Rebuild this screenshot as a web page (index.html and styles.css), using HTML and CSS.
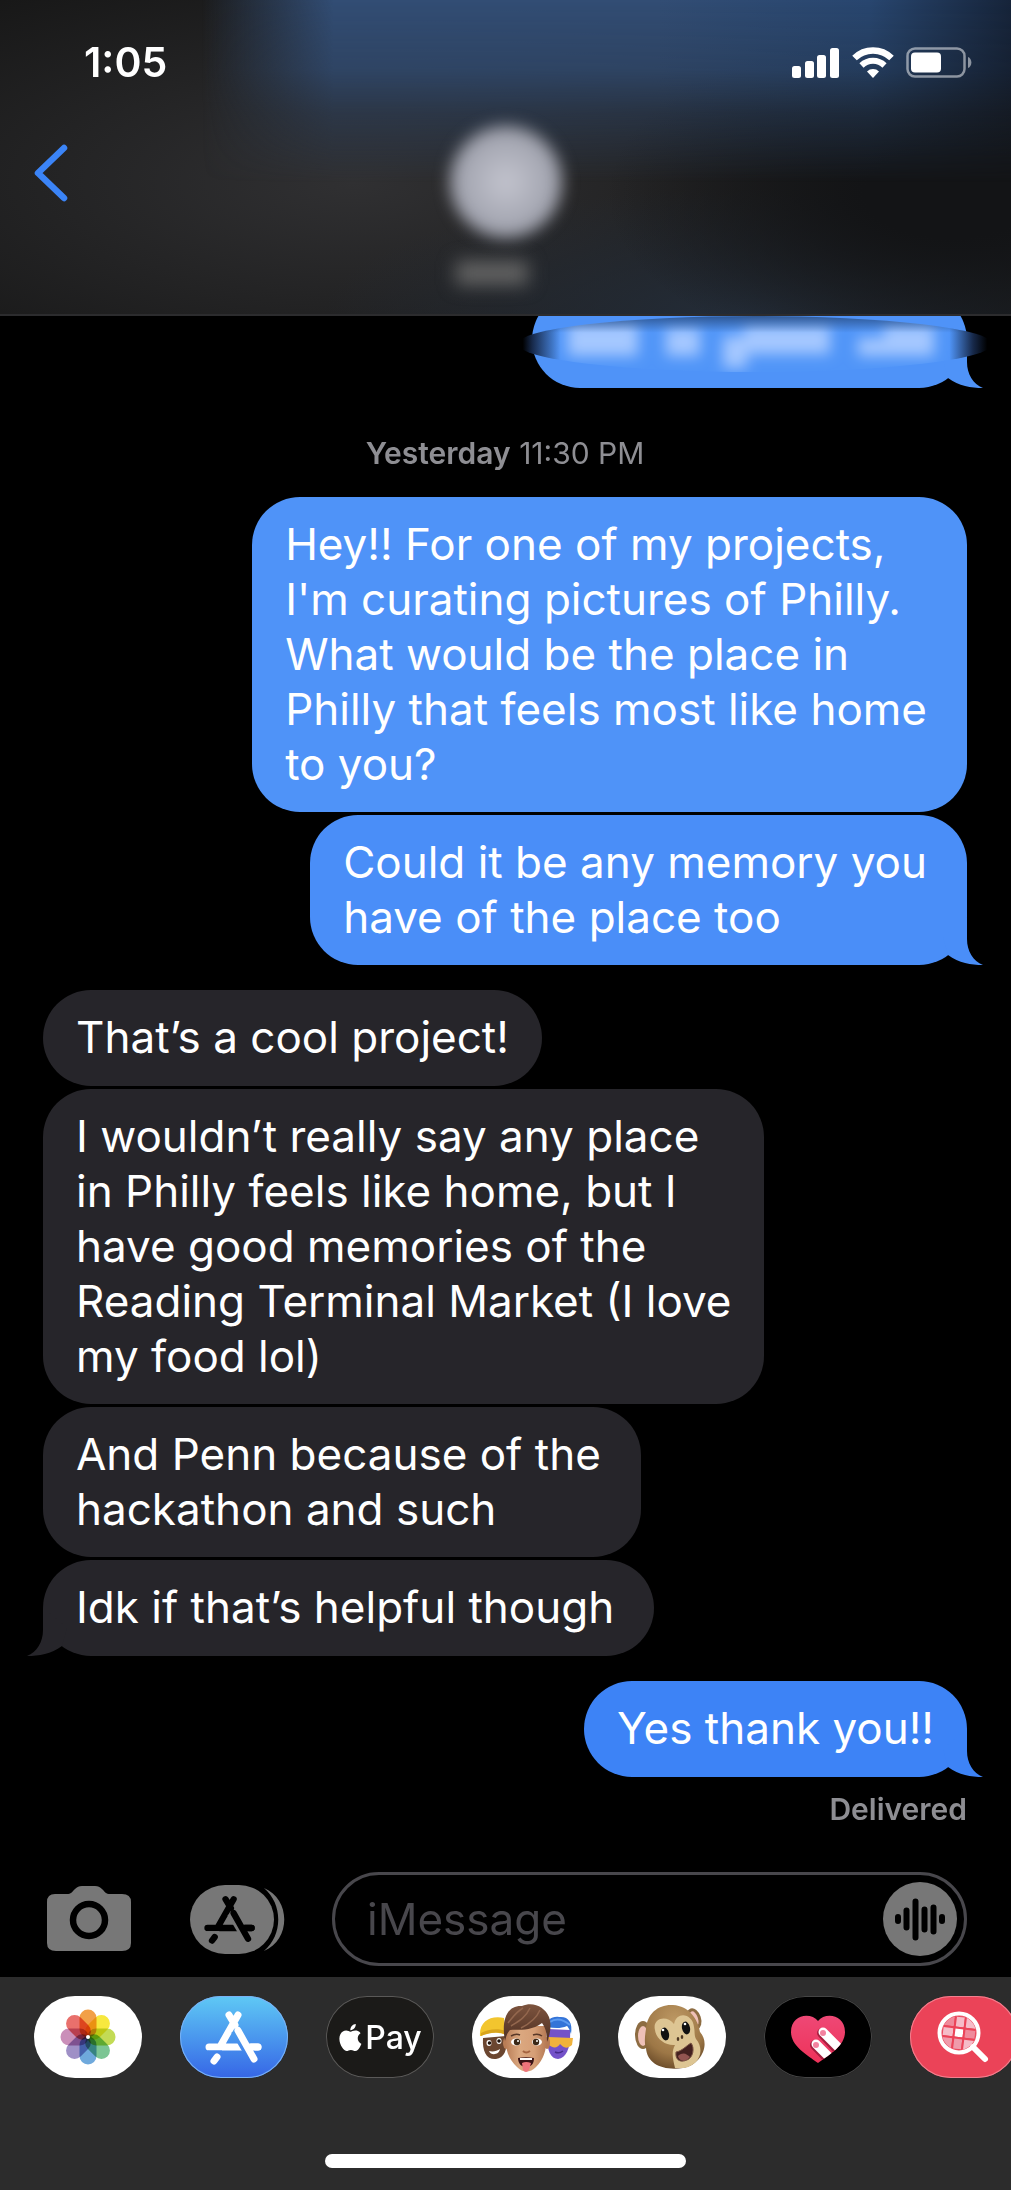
FILE: index.html
```html
<!DOCTYPE html>
<html lang="en">
<head>
<meta charset="utf-8">
<meta name="viewport" content="width=device-width, initial-scale=1">
<title>Messages</title>
<link rel="stylesheet" href="styles.css">
</head>
<body>
<svg class="defs" aria-hidden="true">
  <defs>
    <mask id="a-mask" maskUnits="userSpaceOnUse" x="0" y="0" width="60" height="60">
      <g fill="none" stroke="#fff" stroke-width="7" stroke-linecap="round">
        <path d="M34 8 17 38M25 8l6 10M5 40h49"/>
      </g>
      <path d="M4 45h14" stroke="#000" stroke-width="3"/>
      <path d="M13 50l-3 4" fill="none" stroke="#fff" stroke-width="7" stroke-linecap="round"/>
      <path d="M32 23l17 29" fill="none" stroke="#000" stroke-width="11"/>
      <path d="M34 23.500l16 28.500M44 40h10" fill="none" stroke="#fff" stroke-width="7" stroke-linecap="round"/>
    </mask>
    <symbol id="app-a" viewBox="0 0 60 60"><rect width="60" height="60" fill="currentColor" mask="url(#a-mask)"/></symbol>
    <symbol id="tail" viewBox="0 0 60 48"><path d="M44 0V22C44 34 50 44 60 48C48 48 36 46 25 38L20 20Z" fill="currentColor"/></symbol>
  </defs>
</svg>

<header class="top">
  <div class="status">
    <time class="clock">1:05</time>
    <div class="status-icons">
      <svg width="48" height="32" viewBox="0 0 48 32" fill="#fff" aria-label="Signal"><rect x="0" y="20" width="9" height="12" rx="2.500"/><rect x="13" y="15" width="9" height="17" rx="2.500"/><rect x="25" y="9" width="9" height="23" rx="2.500"/><rect x="38" y="2" width="9" height="30" rx="2.500"/></svg>
      <svg width="42" height="32" viewBox="0 0 42 32" fill="none" stroke="#fff" aria-label="Wi-Fi"><path d="M2.500 12a26.500 26.500 0 0 1 37 0" stroke-width="6.500"/><path d="M9.500 19.500a16.500 16.500 0 0 1 23 0" stroke-width="6"/><path d="M21 32l-6-6.500a8.500 8.500 0 0 1 12 0z" fill="#fff" stroke="none"/></svg>
      <svg width="66" height="32" viewBox="0 0 66 32" aria-label="Battery"><rect x="1.500" y="2.500" width="57" height="28" rx="7.500" fill="none" stroke="#fff" stroke-opacity=".5" stroke-width="2.500"/><rect x="5" y="6.500" width="30" height="20" rx="4" fill="#fff"/><path d="M62 11c4.500 1.500 4.500 9.500 0 11z" fill="#fff" fill-opacity=".5"/></svg>
    </div>
  </div>
  <nav class="nav">
    <button class="plain back" aria-label="Back"><svg width="36" height="60" viewBox="0 0 36 60" fill="none" stroke="#3b84f7" stroke-width="6.500" stroke-linecap="round" stroke-linejoin="round"><path d="M31 5 5 30l26 25"/></svg></button>
    <button class="plain contact" aria-label="Contact"><span class="avatar"></span><span class="contact-name"></span></button>
  </nav>
</header>

<main class="chat">
  <div class="bubble sent cut last-sent">
    <svg class="tail"><use href="#tail"/></svg>
    <svg class="smudge" viewBox="0 0 474 56" aria-hidden="true">
      <defs>
        <clipPath id="oval"><ellipse cx="237" cy="28" rx="237" ry="28"/></clipPath>
        <filter id="soft" x="-30%" y="-60%" width="160%" height="220%"><feGaussianBlur stdDeviation="7"/></filter>
        <linearGradient id="ends"><stop offset=".01" stop-color="#000"/><stop offset=".03" stop-color="#17294a"/><stop offset=".09" stop-color="#5095f8"/><stop offset=".91" stop-color="#5095f8"/><stop offset=".96" stop-color="#17294a"/><stop offset=".99" stop-color="#000"/></linearGradient>
        <linearGradient id="lid" x2="0" y2="1"><stop stop-color="#0b1a33" stop-opacity=".5"/><stop offset=".3" stop-color="#0b1a33" stop-opacity="0"/></linearGradient>
      </defs>
      <g clip-path="url(#oval)">
        <rect width="474" height="56" fill="url(#ends)"/>
        <g fill="#a5c8ff" filter="url(#soft)"><rect x="50" y="8" width="70" height="32"/><rect x="148" y="12" width="34" height="28"/><rect x="205" y="20" width="24" height="32"/><rect x="226" y="10" width="86" height="28"/><rect x="340" y="22" width="30" height="18"/><rect x="366" y="10" width="50" height="30"/></g>
        <rect width="474" height="56" fill="url(#lid)"/>
      </g>
    </svg>
  </div>

  <p class="stamp"><strong>Yesterday</strong> 11:30 PM</p>

  <p class="bubble sent">Hey!! For one of my projects,<br>I'm curating pictures of Philly.<br>What would be the place in<br>Philly that feels most like home<br>to you?</p>
  <p class="bubble sent mid">Could it be any memory you<br>have of the place too<svg class="tail" aria-hidden="true"><use href="#tail"/></svg></p>

  <p class="bubble got turn snug">That’s a cool project!</p>
  <p class="bubble got snug">I wouldn’t really say any place<br>in Philly feels like home, but I<br>have good memories of the<br>Reading Terminal Market (I love<br>my food lol)</p>
  <p class="bubble got">And Penn because of the<br>hackathon and such</p>
  <p class="bubble got">Idk if that’s helpful though<svg class="tail" aria-hidden="true"><use href="#tail"/></svg></p>

  <p class="bubble sent new turn snug">Yes thank you!!<svg class="tail" aria-hidden="true"><use href="#tail"/></svg></p>
  <p class="delivered">Delivered</p>
</main>

<form class="composer">
  <button type="button" class="plain" aria-label="Camera"><svg width="84" height="66" viewBox="0 0 84 66"><path d="M8 8H20C24 8 25 6 28 3C30 1 32 0 35 0H48C51 0 53 1 55 3C58 6 59 8 63 8H75Q84 8 84 16V57Q84 65 75 65H9Q0 65 0 57V16Q0 8 8 8Z" fill="#777"/><circle cx="42" cy="34" r="16" fill="none" stroke="#000" stroke-width="6.500"/></svg></button>
  <button type="button" class="plain apps" aria-label="Apps"><svg width="95" height="69" viewBox="0 0 95 69"><path d="M74 3C101 14 101 55 74 66C93 50 93 19 74 3Z" fill="#777"/><rect width="84" height="69" rx="35" fill="#777"/><use href="#app-a" x="13" y="7" width="54" height="54" color="#000"/></svg></button>
  <div class="field">
    <input type="text" placeholder="iMessage" aria-label="iMessage">
    <button type="button" class="plain" aria-label="Record audio"><svg width="74" height="74" viewBox="0 0 74 74"><circle cx="37" cy="37" r="37" fill="#777"/><path d="M15 35v4M23.500 28.500v17M32.500 19.500v36M41.500 27.500v20M50.500 25.500v24M59 35v4" stroke="#000" stroke-width="6" stroke-linecap="round"/></svg></button>
  </div>
</form>

<footer class="drawer">
  <div class="app-row">
    <button class="app white" aria-label="Photos"><svg width="108" height="82" viewBox="0 0 108 82"><g class="petals">
      <rect x="45.500" y="13.500" width="17" height="28" rx="8.500" fill="#f2a047"/>
      <rect x="45.500" y="13.500" width="17" height="28" rx="8.500" fill="#f7e83e" transform="rotate(45 54 41)"/>
      <rect x="45.500" y="13.500" width="17" height="28" rx="8.500" fill="#c3db55" transform="rotate(90 54 41)"/>
      <rect x="45.500" y="13.500" width="17" height="28" rx="8.500" fill="#7cc594" transform="rotate(135 54 41)"/>
      <rect x="45.500" y="13.500" width="17" height="28" rx="8.500" fill="#6fa9dc" transform="rotate(180 54 41)"/>
      <rect x="45.500" y="13.500" width="17" height="28" rx="8.500" fill="#9f90c6" transform="rotate(225 54 41)"/>
      <rect x="45.500" y="13.500" width="17" height="28" rx="8.500" fill="#ca8fb9" transform="rotate(270 54 41)"/>
      <rect x="45.500" y="13.500" width="17" height="28" rx="8.500" fill="#e9706c" transform="rotate(315 54 41)"/></g><circle cx="54" cy="41" r="2" fill="#fff"/></svg></button>
    <button class="app store" aria-label="App Store"><svg width="60" height="60"><use href="#app-a"/></svg></button>
    <button class="app pay" aria-label="Apple Pay"><svg width="27" height="27" viewBox="1 0 24 24" fill="#fff"><path d="M12.152 6.896c-.948 0-2.415-1.078-3.960-1.040-2.040.027-3.910 1.183-4.961 3.014-2.117 3.675-.546 9.103 1.519 12.090 1.013 1.454 2.208 3.090 3.792 3.039 1.520-.065 2.090-.987 3.935-.987 1.831 0 2.350.987 3.960.948 1.637-.026 2.676-1.480 3.676-2.948 1.156-1.688 1.636-3.325 1.662-3.415-.039-.013-3.182-1.221-3.220-4.857-.026-3.040 2.480-4.494 2.597-4.559-1.429-2.090-3.623-2.324-4.390-2.376-2-.156-3.675 1.090-4.610 1.090zM15.530 3.830c.843-1.012 1.400-2.427 1.245-3.830-1.207.052-2.662.805-3.532 1.818-.78.896-1.454 2.338-1.273 3.714 1.338.104 2.715-.688 3.559-1.701"/></svg><span>Pay</span></button>
    <button class="app white" aria-label="Memoji"><svg width="108" height="82" viewBox="0 0 108 82">
      <defs>
        <linearGradient id="skin"><stop stop-color="#b97d56"/><stop offset=".35" stop-color="#dba880"/><stop offset=".7" stop-color="#d69f77"/><stop offset="1" stop-color="#b67a54"/></linearGradient>
        <linearGradient id="hair" x2="0" y2="1"><stop stop-color="#7d543e"/><stop offset="1" stop-color="#4e2f22"/></linearGradient>
      </defs>
      <path d="M11 42C10 56 15 64 24 63C32 62 36 54 34 40Z" fill="#6b4630"/>
      <path d="M8 40C7 26 18 19 32 22L34 39C26 34 15 37 9 40Z" fill="#f2c52e"/><path d="M9 37C16 33 26 32 34 35V39C26 35 16 37 9 40Z" fill="#d9a51d"/>
      <ellipse cx="17" cy="47" rx="2.500" ry="3" fill="#fff"/><circle cx="17.500" cy="47" r="1.800" fill="#20120c"/><ellipse cx="27" cy="45" rx="2.500" ry="3" fill="#fff"/><circle cx="27" cy="45" r="1.800" fill="#20120c"/><path d="M17 55C21 56 25 55 28 53C27 59 19 60 17 55Z" fill="#fff"/>
      <path d="M75 33C74 53 78 63 86 63C95 62 99 50 98 34Z" fill="#7452c9"/><path d="M75 31C74 24 80 20 87 21C96 20 101 26 99 38C97 32 96 31 95 30C88 33 82 32 75 31Z" fill="#3474d8"/><path d="M78 26C85 21 92 24 98 29" fill="none" stroke="#5d9bf0" stroke-width="2"/>
      <path d="M76 41L101 42L100 49C94 54 91 51 88 48C85 53 80 52 76 48Z" fill="#f0b23c"/><path d="M83 56Q87 58 91 55" fill="none" stroke="#452a8a" stroke-width="1.500"/>
      <ellipse cx="34" cy="47" rx="3" ry="6" fill="#b97d56"/><ellipse cx="75" cy="47" rx="3" ry="6" fill="#b67a54"/>
      <path d="M34 30C32 50 35 62 45 71C51 77 58 77 64 71C73 62 76 50 74 30Z" fill="url(#skin)"/>
      <path d="M33 45C29 24 35 9 50 10C61 5 73 11 77 21C80 29 78 39 75 46C75 36 73 31 70 27C58 36 45 33 38 34C35 37 34 41 33 45Z" fill="url(#hair)"/>
      <path d="M39 30C47 25 54 21 58 12M49 32C59 27 65 21 68 14M36 27C41 21 44 16 51 12" fill="none" stroke="#93674e" stroke-width="1.500"/>
      <path d="M39 40Q44 37 48 39M61 39Q66 37 70 40" fill="none" stroke="#593827" stroke-width="1.500"/>
      <ellipse cx="44" cy="46" rx="5" ry="3.500" fill="#fff"/><circle cx="45" cy="46" r="3.200" fill="#3a2817"/><ellipse cx="65" cy="46" rx="5" ry="3.500" fill="#fff"/><circle cx="64" cy="46" r="3.200" fill="#3a2817"/><circle cx="46" cy="45" r="1" fill="#fff"/><circle cx="65" cy="45" r="1" fill="#fff"/>
      <path d="M51 55Q54 58 58 55" fill="none" stroke="#a56440" stroke-width="2"/><path d="M46 62C51 61 57 61 62 62C62 68 59 71 54 71C49 71 46 67 46 62Z" fill="#3b1316"/><path d="M48 62H60V64H48Z" fill="#fff"/><path d="M50 67Q54 65 59 67L57 74Q54 78 51 74Z" fill="#ee747b"/></svg></button>
    <button class="app white" aria-label="Animoji"><svg width="108" height="82" viewBox="0 0 108 82">
      <defs><radialGradient id="fur" cx=".5" cy=".25" r=".75"><stop offset="0" stop-color="#bd9863"/><stop offset=".7" stop-color="#9d7746"/><stop offset="1" stop-color="#70502c"/></radialGradient></defs>
      <ellipse cx="25" cy="39" rx="8" ry="14" fill="#8d6c42"/><ellipse cx="25" cy="40" rx="5" ry="10" fill="#efc0b7"/><ellipse cx="76" cy="23" rx="7" ry="11" fill="#8d6c42" transform="rotate(-18 76 23)"/><ellipse cx="76" cy="23" rx="4" ry="8" fill="#efc0b7" transform="rotate(-18 76 23)"/>
      <path d="M28 33C29 17 41 8 55 9C71 10 80 23 82 36C93 48 83 69 65 72C45 75 29 68 28 52C26 46 27 39 28 33Z" fill="url(#fur)"/>
      <path d="M37 34C34 23 48 18 56 28C59 14 75 18 76 31C77 36 76 39 78 43C88 55 80 70 66 72H57C55 63 53 56 57 49C48 50 38 43 37 34Z" fill="#ddc593"/>
      <ellipse cx="47" cy="38" rx="4" ry="6.500" fill="#111" transform="rotate(-12 47 38)"/><ellipse cx="68" cy="32" rx="4" ry="6.500" fill="#111" transform="rotate(-12 68 32)"/><circle cx="45" cy="34" r="1.300" fill="#fff"/><circle cx="67" cy="28" r="1.300" fill="#fff"/><ellipse cx="60" cy="43" rx="1.300" ry="2" fill="#4e3824"/><ellipse cx="64" cy="41" rx="1.300" ry="2" fill="#4e3824"/>
      <path d="M58 56C64 55 68 50 73 47C77 52 75 62 69 64C62 67 57 64 58 56Z" fill="#43201f" stroke="#7b5544" stroke-width="1"/><path d="M60 60C66 55 69 59 72 61C68 66 61 66 60 60Z" fill="#925450"/></svg></button>
    <button class="app heart" aria-label="Digital Touch"><svg width="108" height="82" viewBox="0 0 108 82"><defs><linearGradient id="hg" x2="0" y2="1"><stop stop-color="#ee4a78"/><stop offset="1" stop-color="#ee2f55"/></linearGradient><clipPath id="heart"><path d="M54 25C47 16 27 18 27 36C27 50 43 59 54 67C65 59 81 50 81 36C81 18 61 16 54 25Z"/></clipPath></defs><g clip-path="url(#heart)"><rect x="20" y="15" width="68" height="60" fill="url(#hg)"/><path d="M58 37 82 62M51 49 75 74" stroke="#a61f3f" stroke-width="10" stroke-linecap="round"/><path d="M59 36 83 60M52 48 76 72" stroke="#fff" stroke-width="9" stroke-linecap="round"/><circle cx="59" cy="37" r="3" fill="#f3829f"/><circle cx="52" cy="49" r="3" fill="#f3829f"/></g></svg></button>
    <button class="app search" aria-label="Images"><svg width="108" height="82" viewBox="0 0 108 82"><defs><clipPath id="lens"><circle cx="49" cy="37" r="17"/></clipPath></defs><g clip-path="url(#lens)"><g transform="rotate(7 49 37)" stroke="#eb4358" stroke-width="2" fill="#f5bcc8"><rect x="32" y="20" width="12" height="12" fill="#ef8a9b"/><rect x="44" y="20" width="10" height="12"/><rect x="54" y="20" width="12" height="12"/><rect x="32" y="32" width="12" height="10"/><rect x="44" y="32" width="10" height="10" fill="#fff"/><rect x="54" y="32" width="12" height="10" fill="#ef8a9b"/><rect x="32" y="42" width="12" height="12" fill="#ef9bab"/><rect x="44" y="42" width="10" height="12" fill="#ef9bab"/><rect x="54" y="42" width="12" height="12"/></g></g><circle cx="49" cy="37" r="19.500" fill="none" stroke="#fff" stroke-width="4"/><path d="M63 51 75 63" stroke="#fff" stroke-width="6" stroke-linecap="round"/></svg></button>
  </div>
  <div class="home"></div>
</footer>
</body>
</html>
```
FILE: styles.css
```css
* { box-sizing: border-box; }

body {
  margin: 0;
  min-height: 100vh;
  display: flex;
  flex-direction: column;
  overflow-x: hidden;
  background: #000;
  color: #fff;
  font-family: Inter, "Liberation Sans", sans-serif;
}

.defs { position: absolute; width: 0; height: 0; }
svg { display: block; flex: none; }
p { margin: 0; }

.plain {
  display: block;
  padding: 0;
  border: 0;
  background: none;
}

/* Header */
.top {
  position: relative;
  isolation: isolate;
  height: 316px;
  border-bottom: 2px solid #2c2c2e;
  background:
    radial-gradient(ellipse 34% 55% at 94% 62%, #131416 25%, transparent),
    radial-gradient(ellipse 42% 40% at 74% 100%, #242d39, transparent),
    radial-gradient(ellipse 60% 75% at 35% 58%, #303032, transparent),
    #171717;
}

/* Blue light showing through the top of the bar */
.top::before {
  content: "";
  position: absolute;
  inset: 0;
  z-index: -1;
  background: linear-gradient(to right, transparent 20%, #324d74 33%, #324d74 65%, #28466f 86%, #16243a 100%);
  -webkit-mask-image: linear-gradient(#000, #000c 22%, #0006 36%, transparent 58%);
  mask-image: linear-gradient(#000, #000c 22%, #0006 36%, transparent 58%);
}

.status {
  display: flex;
  justify-content: space-between;
  align-items: center;
  padding: 38px 39px 0 84px;
}

.clock {
  font-size: 41px;
  line-height: 48px;
  font-weight: 600;
}

.status-icons { display: flex; gap: 12px; }

.nav {
  display: grid;
  grid-template-columns: 1fr auto 1fr;
  padding: 29px 33px 0;
}

.back { justify-self: start; align-self: start; margin-top: 28px; }

.contact {
  display: flex;
  flex-direction: column;
  align-items: center;
  gap: 23px;
}

.avatar {
  width: 112px;
  height: 112px;
  margin-top: 11px;
  border-radius: 50%;
  background: radial-gradient(circle, #c3c4ce, #8b8e9a);
  filter: blur(8px);
}

.contact-name {
  width: 72px;
  height: 24px;
  margin-right: 28px;
  background: #636363;
  filter: blur(9px);
}

/* Conversation */
.chat {
  flex: 1;
  display: flex;
  flex-direction: column;
  gap: 3px;
  padding: 0 44px 0 43px;
  overflow: hidden;
}

.bubble {
  position: relative;
  min-height: 96px;
  padding: 20px 40px 20px 33px;
  border-radius: 48px;
  font-size: 44px;
  line-height: 55px;
}

.snug { padding-right: 33px; }

.sent {
  align-self: flex-end;
  background: #4f93f8;
  color: #fff;
}

.got {
  align-self: flex-start;
  background: #26252a;
}

.sent.mid { background: #4a8ef8; }
.sent.new { background: #3d83f6; }
.turn { margin-top: 22px; }

.cut {
  width: 435px;
  margin-top: -24px;
}

.tail {
  position: absolute;
  right: -16px;
  bottom: 0;
  width: 60px;
  height: 48px;
  color: #4f93f8;
}

.mid .tail { color: #4a8ef8; }
.new .tail { color: #3d83f6; }

.got .tail {
  right: auto;
  left: -16px;
  color: #26252a;
  transform: scaleX(-1);
}

.smudge {
  position: absolute;
  left: -14px;
  top: 24px;
  width: 474px;
  height: 56px;
}

.stamp {
  padding: 44px 0 23px;
  color: #8e8e93;
  font-size: 30px;
  line-height: 36px;
  text-align: center;
}

.stamp strong { font-weight: 600; }

.delivered {
  padding: 11px 0 0;
  color: #8e8e93;
  font-size: 30px;
  line-height: 36px;
  font-weight: 600;
  text-align: right;
}

/* Message field */
.composer {
  display: flex;
  align-items: center;
  padding: 0 44px 11px 47px;
}

.apps { margin: 0 47px 0 59px; }

.field {
  flex: 1;
  min-width: 0;
  display: flex;
  align-items: center;
  height: 94px;
  padding: 0 7px 0 32px;
  border: 3px solid #48474c;
  border-radius: 47px;
}

.field input {
  flex: 1;
  min-width: 0;
  padding: 0;
  border: 0;
  outline: 0;
  background: none;
  color: #fff;
  font: inherit;
  font-size: 44px;
  line-height: 55px;
}

.field input::placeholder { color: #48474c; opacity: 1; }

/* App drawer */
.drawer {
  padding: 19px 0 22px;
  background: #2c2c2c;
}

.app-row {
  display: flex;
  gap: 38px;
  padding-left: 34px;
  overflow: hidden;
}

.app {
  flex: none;
  display: flex;
  align-items: center;
  justify-content: center;
  width: 108px;
  height: 82px;
  padding: 0;
  border: 0;
  border-radius: 41px;
  color: #fff;
  font: inherit;
}

.white { background: #fff; }
.store { background: linear-gradient(#5fc9f5, #3666e6); box-shadow: inset 0 0 0 1px #79b2f5; }
.pay { background: #1b1a18; box-shadow: inset 0 0 0 1px #5a5958; font-size: 32px; font-weight: 500; }
.heart { background: #000; box-shadow: inset 0 0 0 1px #454545; }
.search { background: #eb4358; box-shadow: inset 0 0 0 1px #f2808f; }

.petals { isolation: isolate; }
.petals rect { mix-blend-mode: multiply; }

.home {
  width: 361px;
  height: 14px;
  margin: 76px auto 0;
  border-radius: 7px;
  background: #fff;
}
```
